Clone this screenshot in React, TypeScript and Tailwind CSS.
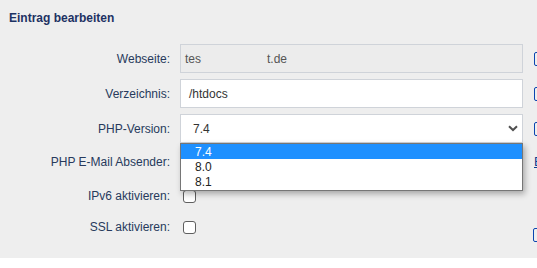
const font = "font-['Liberation_Sans',Arial,sans-serif]"

function RightBox({ className = '' }: { className?: string }) {
  return <div className={`ml-[11px] h-[14px] w-[20px] shrink-0 rounded-[2px] border-[1.5px] border-[#0a45b0] ${className}`} />
}

function Label({ children }: { children: string }) {
  return <div className="w-[161px] shrink-0 text-right text-[12px] text-[#273a5c]">{children}</div>
}

export default function App() {
  return (
    <div className={`h-[268px] w-[537px] overflow-hidden bg-white ${font}`}>
      <div className="h-[258px] bg-[#eeeeee] pl-[9px] pt-[10px]">
        <h2 className="text-[12px] font-bold leading-[16px] text-[#1d3263]">Eintrag bearbeiten</h2>

        <div className="mt-[18px] flex h-[29px] items-center">
          <Label>Webseite:</Label>
          <div className="ml-[10px] flex h-[29px] w-[343px] shrink-0 items-center border border-[#cfd3d9] bg-[#ececec] pl-[4px] text-[12px] text-[#555]">
            <span>tes</span>
            <span className="ml-[66px]">t.de</span>
          </div>
          <RightBox />
        </div>

        <div className="mt-[6px] flex h-[29px] items-center">
          <Label>Verzeichnis:</Label>
          <div className="ml-[10px] flex h-[29px] w-[343px] shrink-0 items-center border border-[#cfd3d9] bg-white pl-[8px] text-[12px] text-[#333]">
            /htdocs
          </div>
          <RightBox />
        </div>

        <div className="relative z-10 mt-[6px] flex h-[29px] items-center">
          <Label>PHP-Version:</Label>
          <div className="relative ml-[10px] h-[29px] w-[343px] shrink-0">
            <div className="flex h-full items-center justify-between border border-[#cfd3d9] bg-white pl-[12px] pr-[4px] text-[12px] text-[#333]">
              <span>7.4</span>
              <svg width="10" height="7" viewBox="0 0 10 7" className="mr-[0px]">
                <path d="M1 1.2 L5 5 L9 1.2" fill="none" stroke="#505050" strokeWidth="2" />
              </svg>
            </div>
            <div className="absolute left-0 top-full w-[343px] border border-[#767676] bg-white text-[12px] shadow-[2px_3px_6px_rgba(0,0,0,0.3)]">
              <div className="flex h-[15px] items-center bg-[#1e90ff] pl-[14px] text-white">7.4</div>
              <div className="flex h-[15px] items-center pl-[14px] text-[#222]">8.0</div>
              <div className="flex h-[16px] items-center pl-[14px] text-[#222]">8.1</div>
            </div>
          </div>
          <RightBox />
        </div>

        <div className="mt-[4px] flex h-[29px] items-center">
          <Label>PHP E-Mail Absender:</Label>
          <div className="ml-[10px] h-[29px] w-[343px] shrink-0 border border-[#cfd3d9] bg-white" />
          <span className="ml-[11px] text-[13px] text-[#0b3d91] underline">E</span>
        </div>

        <div className="mt-[8px] flex h-[24px] items-center">
          <Label>IPv6 aktivieren:</Label>
          <div className="ml-[13px] h-[13px] w-[13px] shrink-0 rounded-[3px] border border-[#5f5f5f] bg-white" />
        </div>

        <div className="mt-[7px] flex h-[24px] items-center">
          <Label>SSL aktivieren:</Label>
          <div className="ml-[13px] h-[13px] w-[13px] shrink-0 rounded-[3px] border border-[#5f5f5f] bg-white" />
          <RightBox className="ml-[337px] self-start mt-[13px]" />
        </div>
      </div>
    </div>
  )
}
